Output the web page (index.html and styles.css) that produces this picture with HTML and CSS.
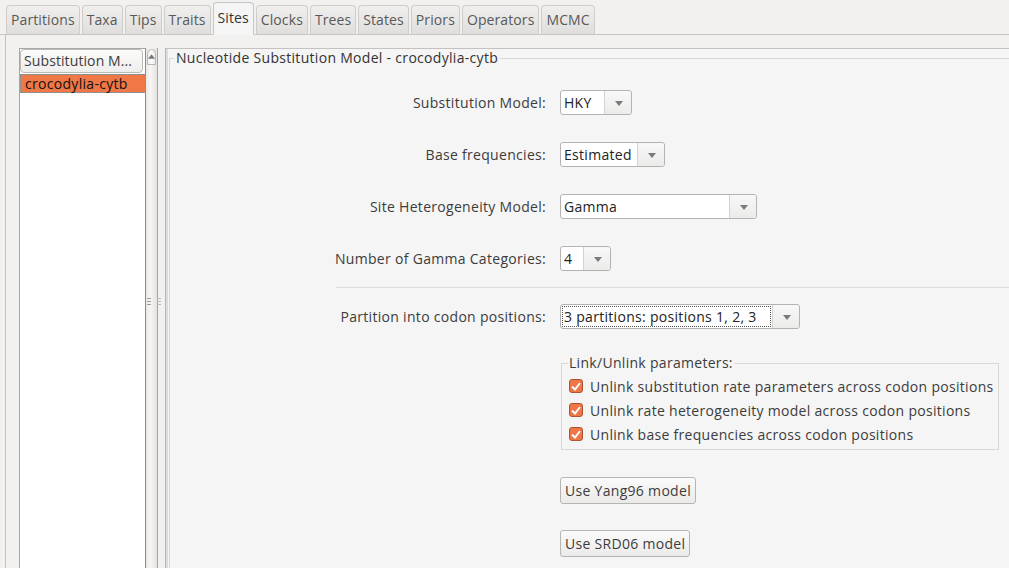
FILE: index.html
```html
<!DOCTYPE html>
<html>
<head>
<meta charset="utf-8">
<link rel="stylesheet" href="styles.css">
</head>
<body>
<div class="tabs">
  <div class="tab">Partitions</div>
  <div class="tab">Taxa</div>
  <div class="tab">Tips</div>
  <div class="tab">Traits</div>
  <div class="tab selected">Sites</div>
  <div class="tab">Clocks</div>
  <div class="tab">Trees</div>
  <div class="tab">States</div>
  <div class="tab">Priors</div>
  <div class="tab">Operators</div>
  <div class="tab">MCMC</div>
</div>
<div class="content">
  <div class="leftpane">
    <div class="list">
      <div class="list-header">Substitution M...</div>
      <div class="list-item selected">crocodylia-cytb</div>
    </div>
    <div class="scrollbar">
      <div class="scroll-up"><svg width="8" height="5" viewBox="0 0 8 5"><path d="M0 5 L4 0 L8 5 Z" fill="#777"/></svg></div>
    </div>
  </div>
  <div class="splitter">
    <div class="grip"><span></span><span></span><span></span></div>
    <div class="grip"><span></span><span></span><span></span></div>
  </div>
  <div class="rightpane">
    <fieldset class="model">
      <legend>Nucleotide Substitution Model - crocodylia-cytb</legend>
      <div class="form">
        <div class="row">
          <label class="lbl">Substitution Model:</label>
          <div class="combo w-hky"><span class="val">HKY</span><span class="arrow"></span></div>
        </div>
        <div class="row">
          <label class="lbl">Base frequencies:</label>
          <div class="combo w-est"><span class="val">Estimated</span><span class="arrow"></span></div>
        </div>
        <div class="row">
          <label class="lbl">Site Heterogeneity Model:</label>
          <div class="combo w-gamma"><span class="val">Gamma</span><span class="arrow"></span></div>
        </div>
        <div class="row">
          <label class="lbl">Number of Gamma Categories:</label>
          <div class="combo w-cat"><span class="val">4</span><span class="arrow"></span></div>
        </div>
        <div class="sep"></div>
        <div class="row r-part">
          <label class="lbl">Partition into codon positions:</label>
          <div class="combo w-part"><span class="val focus">3 partitions: positions 1, 2, 3</span><span class="arrow"></span></div>
        </div>
        <div class="row r-group">
          <span class="lbl"></span>
          <fieldset class="group">
            <legend>Link/Unlink parameters:</legend>
            <div class="check"><span class="box"><svg width="10" height="9" viewBox="0 0 10 9"><path d="M1 4.5 L4 7.5 L9 1" fill="none" stroke="#fff" stroke-width="2"/></svg></span>Unlink substitution rate parameters across codon positions</div>
            <div class="check"><span class="box"><svg width="10" height="9" viewBox="0 0 10 9"><path d="M1 4.5 L4 7.5 L9 1" fill="none" stroke="#fff" stroke-width="2"/></svg></span>Unlink rate heterogeneity model across codon positions</div>
            <div class="check"><span class="box"><svg width="10" height="9" viewBox="0 0 10 9"><path d="M1 4.5 L4 7.5 L9 1" fill="none" stroke="#fff" stroke-width="2"/></svg></span>Unlink base frequencies across codon positions</div>
          </fieldset>
        </div>
        <div class="row r-btn1">
          <span class="lbl"></span>
          <button class="btn">Use Yang96 model</button>
        </div>
        <div class="row r-btn2">
          <span class="lbl"></span>
          <button class="btn">Use SRD06 model</button>
        </div>
      </div>
    </fieldset>
  </div>
</div>
</body>
</html>
```
FILE: styles.css
```css
* { box-sizing: border-box; }
html, body {
  margin: 0;
  padding: 0;
  width: 1009px;
  height: 568px;
  overflow: hidden;
  background: #f2f1f0;
  font-family: "Open Sans", "DejaVu Sans", sans-serif;
  font-size: 14px;
  letter-spacing: 0.3px;
  color: #3c3c3c;
}
.tabs {
  display: flex;
  align-items: flex-end;
  gap: 2px;
  height: 35px;
  padding-left: 6px;
  border-bottom: 1px solid #c8c6c3;
}
.tab {
  height: 30px;
  padding: 0 4px;
  margin-bottom: -1px;
  border: 1px solid #cfcdca;
  border-bottom: 1px solid #c8c6c3;
  border-radius: 4px 4px 0 0;
  background: linear-gradient(#f0efee, #dfdedc);
  color: #595959;
  line-height: 28px;
  white-space: nowrap;
  letter-spacing: 0.1px;
}
.tab.selected {
  height: 33px;
  background: #f5f5f5;
  border-color: #c8c6c3;
  border-bottom-color: #f5f5f5;
  color: #333;
  line-height: 30px;
}
.content {
  display: flex;
  height: 533px;
  margin-left: 5px;
  border-left: 1px solid #c4c2c0;
  background: #f2f1f0;
}
.leftpane {
  display: flex;
  margin-left: 13px;
  margin-top: 13px;
}
.list {
  width: 127px;
  background: #fff;
  border: 1px solid #a9a7a5;
  border-right: 1px solid #8e8c8a;
  border-bottom: none;
}
.list-header {
  height: 24px;
  margin: 0 2px 1px 0;
  border: 1px solid #bdbbb9;
  border-radius: 4px;
  background: linear-gradient(#fbfbfa, #efeeed);
  padding-left: 3px;
  line-height: 22px;
  white-space: nowrap;
  letter-spacing: 0.1px;
}
.list-item {
  height: 19px;
  padding-left: 4px;
  line-height: 18px;
  color: #111;
}
.list-item.selected {
  background: #f07746;
  border: 1px solid #8f8f8f;
  margin-right: -1px;
}
.scrollbar {
  width: 12px;
  background: linear-gradient(90deg, #e9e8e7, #f7f6f5 40%, #e4e2e0);
  border-right: 1px solid #a8a6a4;
}
.scroll-up {
  height: 16px;
  margin: 1px 1px 0 1px;
  border: 1px solid #b9b7b5;
  border-radius: 5px 5px 0 0;
  display: flex;
  justify-content: center;
  padding-top: 4px;
  background: linear-gradient(90deg, #f0efee, #fbfbfb, #eceae8);
}
.splitter {
  width: 7px;
  display: flex;
  align-items: center;
  padding-left: 1px;
}
.grip {
  display: flex;
  flex-direction: column;
  gap: 2px;
  width: 4px;
}
.grip:first-child {
  margin-left: -12px;
  margin-right: 6px;
}
.grip span {
  display: block;
  height: 1px;
  background: #9e9c9a;
}
.grip:last-child span { background: #bdbbb9; }
.rightpane {
  flex: 1;
  margin-top: 13px;
  border-left: 1px solid #b8b6b4;
  border-top: 1px solid #c4c2c0;
  background: #f5f5f5;
  padding: 0 0 0 2px;
  box-shadow: inset 2px 0 0 #dddcdb;
}
fieldset.model {
  margin: 1px -20px 0 1px;
  padding: 0;
  border: 1px solid #d8d7d6;
  border-right: none;
  min-height: 540px;
}
fieldset.model > legend {
  margin-left: 4px;
  padding: 0 2px;
  color: #333;
  line-height: 16px;
}
.form {
  display: flex;
  flex-direction: column;
  padding-top: 24px;
}
.row {
  display: flex;
  align-items: center;
  height: 25px;
  margin-bottom: 27px;
}
.lbl {
  width: 376px;
  flex: none;
  text-align: right;
  margin-right: 14px;
  white-space: nowrap;
}
.combo {
  display: flex;
  height: 25px;
  background: #fff;
  border: 1px solid #b4b3b2;
  border-radius: 3px;
}
.combo .val {
  flex: 1;
  padding-left: 3px;
  line-height: 23px;
  white-space: nowrap;
  color: #222;
}
.combo .val.focus {
  outline: 1px dotted #555;
  outline-offset: -2px;
}
.combo .arrow {
  width: 27px;
  border-left: 1px solid #d3d2d1;
  background: linear-gradient(#f8f8f8, #ecebea);
  border-radius: 0 3px 3px 0;
  position: relative;
}
.combo .arrow::after {
  content: "";
  position: absolute;
  left: 10px;
  top: 10px;
  border-left: 4px solid transparent;
  border-right: 4px solid transparent;
  border-top: 5px solid #7a7a7a;
}
.w-hky { width: 72px; }
.w-est { width: 105px; }
.w-gamma { width: 197px; }
.w-cat { width: 51px; }
.w-part { width: 240px; }
.sep {
  height: 1px;
  background: #dcdbda;
  margin: -11px 9px 16px 166px;
}
.r-part { margin-bottom: 26px; }
.r-group {
  height: auto;
  align-items: flex-start;
  margin-bottom: 27px;
}
fieldset.group {
  margin: 0 0 0 1px;
  padding: 3px 0 3px 5px;
  width: 438px;
  border: 1px solid #d8d7d6;
}
fieldset.group > legend {
  padding: 0 1px;
  margin-left: 1px;
  line-height: 16px;
}
.check {
  display: flex;
  align-items: center;
  height: 24px;
  white-space: nowrap;
}
.box {
  width: 14px;
  height: 14px;
  margin: 0 7px 0 2px;
  border-radius: 3px;
  background: #ef7648;
  border: 1px solid #b5532d;
  display: flex;
  align-items: center;
  justify-content: center;
}
.btn {
  height: 27px;
  padding: 0 4px;
  font-family: inherit;
  font-size: 14px;
  letter-spacing: 0.3px;
  color: #3c3c3c;
  border: 1px solid #b6b5b4;
  border-radius: 3px;
  background: linear-gradient(#fbfbfb, #ebeae9);
}
.r-btn1 { height: 27px; margin-bottom: 27px; }
```
